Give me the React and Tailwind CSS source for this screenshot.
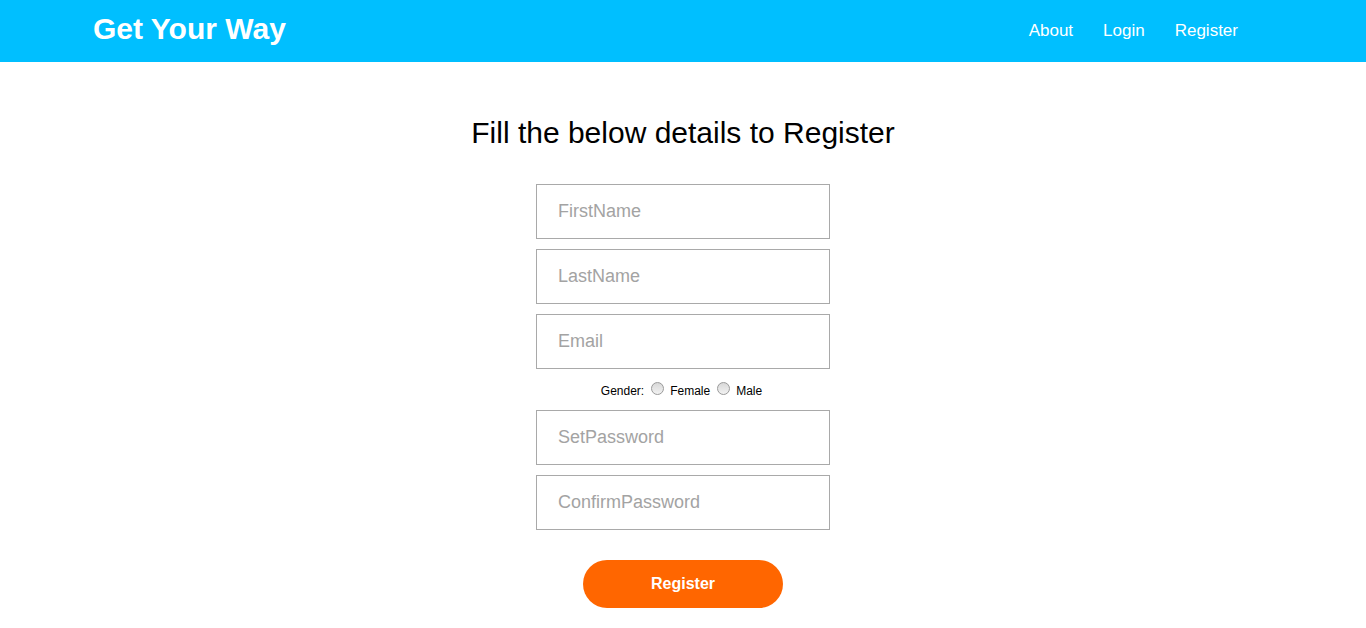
export default function App() {
  const field = 'w-[294px] h-[55px] border border-[#a9a9a9] pl-[21px] text-[18px] text-black placeholder:text-[#a3a3a3] outline-none';
  const radio = 'appearance-none m-0 ml-[3px] w-[13px] h-[13px] rounded-full border border-[#9a9a9a] bg-gradient-to-b from-[#d8d8d8] to-[#f2f2f2] -translate-y-[2px]';
  return (
    <div className="min-h-screen bg-white font-['Liberation_Sans',Arial,sans-serif]">
      {/* Header */}
      <header className="h-[62px] bg-[#00bfff] flex items-center justify-between pl-[93px] pr-[128px]">
        <h1 className="text-white font-bold text-[30px] leading-none mb-[4px]">Get Your Way</h1>
        <nav className="flex gap-[30px] text-white text-[17px]">
          <a href="#">About</a>
          <a href="#">Login</a>
          <a href="#">Register</a>
        </nav>
      </header>

      <main className="flex flex-col items-center">
        <h2 className="mt-[54px] text-[30px] leading-[34px] text-black">Fill the below details to Register</h2>
        <form className="mt-[34px] flex flex-col items-center">
          <div className="flex flex-col gap-[10px]">
            <input className={field} placeholder="FirstName" />
            <input className={field} placeholder="LastName" />
            <input className={field} placeholder="Email" />
          </div>
          <div className="h-[41px] flex items-center justify-center gap-[4px] text-[12px] text-black pt-[2px] pr-[3px]">
            <span>Gender:</span>
            <input type="radio" name="g" className={radio} />
            <span className="ml-[2px]">Female</span>
            <input type="radio" name="g" className={radio} />
            <span className="ml-[2px]">Male</span>
          </div>
          <div className="flex flex-col gap-[10px]">
            <input type="password" className={field} placeholder="SetPassword" />
            <input type="password" className={field} placeholder="ConfirmPassword" />
          </div>
          <button type="button" className="mt-[30px] w-[200px] h-[48px] rounded-full bg-[#ff6600] text-white font-bold text-[16px]">
            Register
          </button>
        </form>
      </main>
    </div>
  );
}
